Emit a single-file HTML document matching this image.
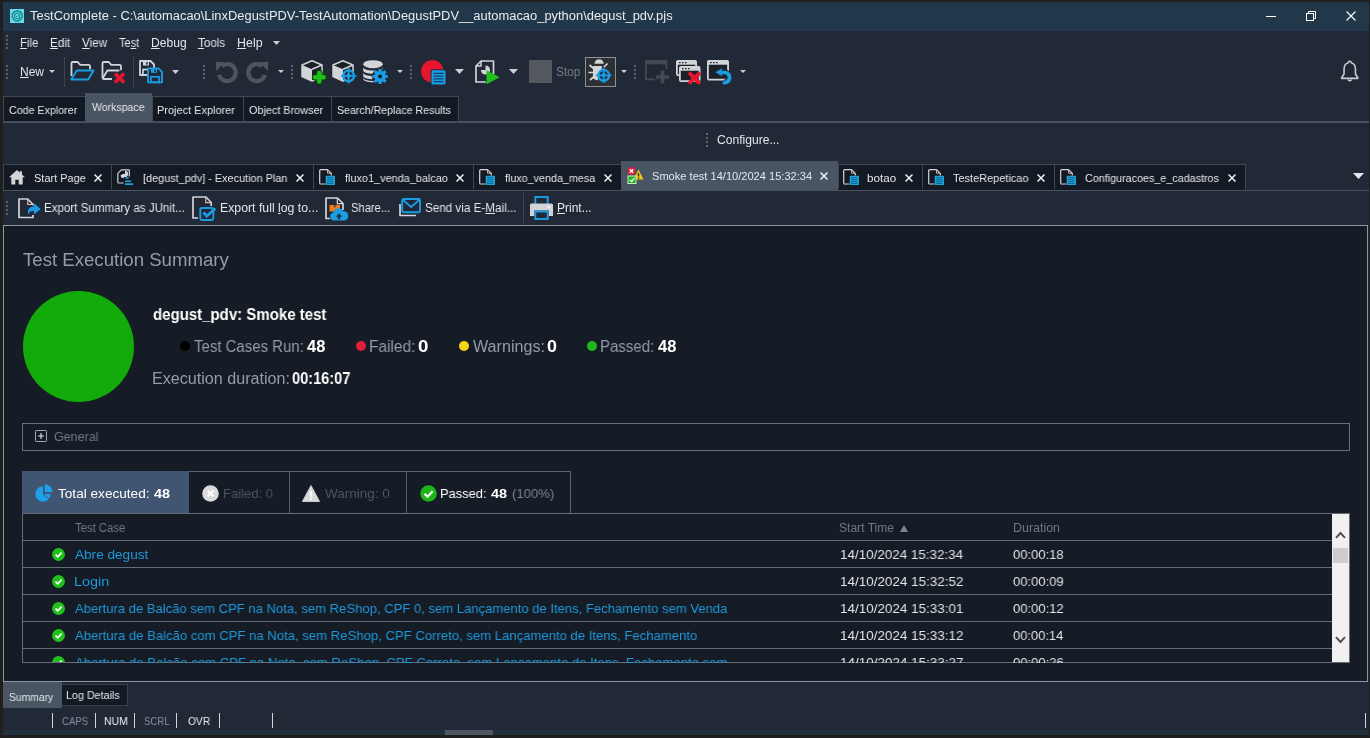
<!DOCTYPE html>
<html lang="pt-BR"><head><meta charset="utf-8"><title>TestComplete</title>
<style>
html,body{margin:0;padding:0}
body{width:1370px;height:738px;overflow:hidden;background:#1f1f1f;font-family:"Liberation Sans", sans-serif;position:relative}
.a{position:absolute;display:block}
.t{position:absolute;white-space:nowrap;line-height:1;margin:0;padding:0;transform-origin:0 0;will-change:transform}
u{text-decoration:underline;text-underline-offset:1px}
b{font-weight:700}
</style></head><body>
<div class="a" style="left:3px;top:2px;width:1366px;height:734px;background:#212836;"></div>
<div class="a" style="left:3px;top:2px;width:1366px;height:29px;background:#21374a;"></div>
<div class="a" style="left:3px;top:730px;width:1366px;height:5px;background:#222f3c;"></div>
<div class="a" style="left:445px;top:730px;width:48px;height:5px;background:#4d5764;"></div>
<div class="a" style="left:0px;top:735px;width:1370px;height:3px;background:#1e1e1e;"></div>
<div class="a" style="left:6px;top:35px;width:2px;height:2px;background:#5c6470;"></div>
<div class="a" style="left:6px;top:39px;width:2px;height:2px;background:#5c6470;"></div>
<div class="a" style="left:6px;top:43px;width:2px;height:2px;background:#5c6470;"></div>
<div class="a" style="left:6px;top:47px;width:2px;height:2px;background:#5c6470;"></div>
<div class="a" style="left:6px;top:65px;width:2px;height:2px;background:#5c6470;"></div>
<div class="a" style="left:6px;top:69px;width:2px;height:2px;background:#5c6470;"></div>
<div class="a" style="left:6px;top:73px;width:2px;height:2px;background:#5c6470;"></div>
<div class="a" style="left:6px;top:77px;width:2px;height:2px;background:#5c6470;"></div>
<div class="a" style="left:64px;top:57px;width:1px;height:30px;background:#3b4452;"></div>
<div class="a" style="left:133px;top:57px;width:1px;height:30px;background:#3b4452;"></div>
<div class="a" style="left:203px;top:65px;width:2px;height:2px;background:#5c6470;"></div>
<div class="a" style="left:203px;top:69px;width:2px;height:2px;background:#5c6470;"></div>
<div class="a" style="left:203px;top:73px;width:2px;height:2px;background:#5c6470;"></div>
<div class="a" style="left:203px;top:77px;width:2px;height:2px;background:#5c6470;"></div>
<div class="a" style="left:291px;top:65px;width:2px;height:2px;background:#5c6470;"></div>
<div class="a" style="left:291px;top:69px;width:2px;height:2px;background:#5c6470;"></div>
<div class="a" style="left:291px;top:73px;width:2px;height:2px;background:#5c6470;"></div>
<div class="a" style="left:291px;top:77px;width:2px;height:2px;background:#5c6470;"></div>
<div class="a" style="left:410px;top:65px;width:2px;height:2px;background:#5c6470;"></div>
<div class="a" style="left:410px;top:69px;width:2px;height:2px;background:#5c6470;"></div>
<div class="a" style="left:410px;top:73px;width:2px;height:2px;background:#5c6470;"></div>
<div class="a" style="left:410px;top:77px;width:2px;height:2px;background:#5c6470;"></div>
<div class="a" style="left:585px;top:57px;width:31px;height:30px;background:#2e2f33;box-sizing:border-box;border:1px solid #8d939c;"></div>
<div class="a" style="left:634px;top:65px;width:2px;height:2px;background:#5c6470;"></div>
<div class="a" style="left:634px;top:69px;width:2px;height:2px;background:#5c6470;"></div>
<div class="a" style="left:634px;top:73px;width:2px;height:2px;background:#5c6470;"></div>
<div class="a" style="left:634px;top:77px;width:2px;height:2px;background:#5c6470;"></div>
<div class="a" style="left:3px;top:121px;width:1366px;height:2px;background:#4a5262;"></div>
<div class="a" style="left:3px;top:96px;width:456px;height:26px;background:#141a23;box-sizing:border-box;border:1px solid #404856;"></div>
<div class="a" style="left:152px;top:97px;width:1px;height:24px;background:#404856;"></div>
<div class="a" style="left:243px;top:97px;width:1px;height:24px;background:#404856;"></div>
<div class="a" style="left:331px;top:97px;width:1px;height:24px;background:#404856;"></div>
<div class="a" style="left:85px;top:93px;width:67px;height:29px;background:#4a5564;"></div>
<div class="a" style="left:706px;top:133px;width:2px;height:2px;background:#5c6470;"></div>
<div class="a" style="left:706px;top:137px;width:2px;height:2px;background:#5c6470;"></div>
<div class="a" style="left:706px;top:141px;width:2px;height:2px;background:#5c6470;"></div>
<div class="a" style="left:706px;top:145px;width:2px;height:2px;background:#5c6470;"></div>
<div class="a" style="left:3px;top:190px;width:1366px;height:1px;background:#4a5261;"></div>
<div class="a" style="left:3px;top:164px;width:1243px;height:26px;background:#141a23;box-sizing:border-box;border:1px solid #404856;border-bottom:none;"></div>
<div class="a" style="left:111px;top:165px;width:1px;height:24px;background:#404856;"></div>
<div class="a" style="left:313px;top:165px;width:1px;height:24px;background:#404856;"></div>
<div class="a" style="left:473px;top:165px;width:1px;height:24px;background:#404856;"></div>
<div class="a" style="left:838px;top:165px;width:1px;height:24px;background:#404856;"></div>
<div class="a" style="left:922px;top:165px;width:1px;height:24px;background:#404856;"></div>
<div class="a" style="left:1054px;top:165px;width:1px;height:24px;background:#404856;"></div>
<div class="a" style="left:621px;top:161px;width:217px;height:30px;background:#4a5564;"></div>
<div class="a" style="left:6px;top:201px;width:2px;height:2px;background:#5c6470;"></div>
<div class="a" style="left:6px;top:205px;width:2px;height:2px;background:#5c6470;"></div>
<div class="a" style="left:6px;top:209px;width:2px;height:2px;background:#5c6470;"></div>
<div class="a" style="left:6px;top:213px;width:2px;height:2px;background:#5c6470;"></div>
<div class="a" style="left:523px;top:193px;width:1px;height:30px;background:#3b4452;"></div>
<div class="a" style="left:3px;top:225px;width:1365px;height:457px;background:#161c25;box-sizing:border-box;border:1px solid #8c97a5;"></div>
<div class="a" style="left:23px;top:291px;width:111px;height:111px;background:#13ab0a;border-radius:50%;"></div>
<div class="a" style="left:179.5px;top:341px;width:10px;height:10px;background:#000000;border-radius:50%;"></div>
<div class="a" style="left:356px;top:341px;width:10px;height:10px;background:#e0203a;border-radius:50%;"></div>
<div class="a" style="left:459px;top:341px;width:10px;height:10px;background:#f5d416;border-radius:50%;"></div>
<div class="a" style="left:587px;top:341px;width:10px;height:10px;background:#1fb81a;border-radius:50%;"></div>
<div class="a" style="left:22px;top:423px;width:1328px;height:28px;box-sizing:border-box;border:1px solid #68717d;"></div>
<div class="a" style="left:22px;top:471px;width:549px;height:43px;box-sizing:border-box;border:1px solid #5c6571;"></div>
<div class="a" style="left:22px;top:471px;width:167px;height:43px;background:#3f5572;"></div>
<div class="a" style="left:289px;top:472px;width:1px;height:41px;background:#535c68;"></div>
<div class="a" style="left:406px;top:472px;width:1px;height:41px;background:#535c68;"></div>
<div class="a" style="left:22px;top:513px;width:1328px;height:150px;box-sizing:border-box;border:1px solid #646d79;"></div>
<div class="a" style="left:23px;top:540px;width:1309px;height:1px;background:#646d79;"></div>
<div class="a" style="left:23px;top:567px;width:1309px;height:1px;background:#646d79;"></div>
<div class="a" style="left:23px;top:594px;width:1309px;height:1px;background:#646d79;"></div>
<div class="a" style="left:23px;top:621px;width:1309px;height:1px;background:#646d79;"></div>
<div class="a" style="left:23px;top:648px;width:1309px;height:1px;background:#646d79;"></div>
<div class="a" style="left:1332px;top:514px;width:17px;height:148px;background:#f0f0f0;"></div>
<div class="a" style="left:1333px;top:548px;width:15px;height:15px;background:#cdcdcd;"></div>
<div class="a" style="left:62px;top:684px;width:66px;height:22px;background:#141a23;box-sizing:border-box;border:1px solid #363f4c;border-left:none;"></div>
<div class="a" style="left:3px;top:682px;width:59px;height:26px;background:#4a5564;"></div>
<div class="a" style="left:52px;top:713px;width:1px;height:15px;background:#d0d4d9;"></div>
<div class="a" style="left:95px;top:713px;width:1px;height:15px;background:#d0d4d9;"></div>
<div class="a" style="left:134px;top:713px;width:1px;height:15px;background:#d0d4d9;"></div>
<div class="a" style="left:176px;top:713px;width:1px;height:15px;background:#d0d4d9;"></div>
<div class="a" style="left:219px;top:713px;width:1px;height:15px;background:#d0d4d9;"></div>
<div class="a" style="left:272px;top:713px;width:1px;height:15px;background:#d0d4d9;"></div>
<div class="a" style="left:1365px;top:713px;width:1px;height:15px;background:#d0d4d9;"></div>
<svg class="a" style="left:9.7px;top:8.8px" width="14.5" height="14.5" viewBox="0 0 16 16"><rect width="16" height="16" fill="#62dbe7"/><path d="M8 1.800l1.500 1 1.800-.2.700 1.700 1.600.9-.5 1.800.7 1.700-1.400 1.200-.2 1.800-1.800.4L9.300 13.500 8 12.900l-1.300.6-1.100-1.400-1.800-.4-.2-1.800-1.400-1.200.7-1.700-.5-1.800 1.600-.9.700-1.700 1.800.2z" fill="none" stroke="#17808f" stroke-width="1.400" stroke-linejoin="round"/><circle cx="8" cy="7.700" r="3" fill="none" stroke="#17808f" stroke-width="1.200"/><path d="M6.700 7.700l.9 1 1.700-1.900" fill="none" stroke="#17808f" stroke-width="1"/></svg>
<svg class="a" style="left:1266px;top:16px" width="10" height="1" viewBox="0 0 10 1"><rect width="10" height="1" fill="#fff"/></svg>
<svg class="a" style="left:1306px;top:11px" width="10" height="10" viewBox="0 0 10 10"><path d="M2.5 2.5V.5h7v7h-2" fill="none" stroke="#fff"/><rect x=".5" y="2.5" width="7" height="7" fill="none" stroke="#fff"/></svg>
<svg class="a" style="left:1346px;top:11px" width="10" height="10" viewBox="0 0 10 10"><path d="M.5.5l9 9M9.500.5L.5 9.500" stroke="#fff" stroke-width="1.1" fill="none"/></svg>
<svg class="a" style="left:273px;top:41px" width="7" height="4" viewBox="0 0 7 4"><path d="M0 0H7L3.5 4Z" fill="#c9ced6"/></svg>
<svg class="a" style="left:49px;top:70px" width="6" height="3" viewBox="0 0 6 3"><path d="M0 0H6L3.0 3Z" fill="#c9ced6"/></svg>
<svg class="a" style="left:70px;top:61px" width="25" height="20" viewBox="0 0 25 20"><path d="M1.500 15V2.200c0-.7.500-1.200 1.200-1.200h5.100l2.400 2.800h8.300c.9 0 1.500.6 1.500 1.500v3" fill="none" stroke="#d2d4d7" stroke-width="1.800" stroke-linejoin="round"/><path d="M6.800 9.500h16.700l-5.300 9H1.200z" fill="none" stroke="#1b9de4" stroke-width="1.900" stroke-linejoin="round"/></svg>
<svg class="a" style="left:101px;top:61px" width="25" height="23" viewBox="0 0 25 23"><path d="M11 18H2.700c-.7 0-1.200-.5-1.200-1.200V2.200c0-.7.500-1.200 1.200-1.200h5.100l2.400 2.800h8.300c.9 0 1.500.6 1.500 1.500v4" fill="none" stroke="#d2d4d7" stroke-width="1.800" stroke-linejoin="round"/><path d="M1.800 17l4.600-7.500h12" fill="none" stroke="#d2d4d7" stroke-width="1.800" stroke-linejoin="round"/><path d="M14 12.500l9 9M23 12.500l-9 9" stroke="#e8152f" stroke-width="3.600" fill="none"/></svg>
<svg class="a" style="left:139px;top:60px" width="25" height="24" viewBox="0 0 25 24"><g transform="translate(0,0)"><path d="M1 1h10.500l3.500 3.500V15H1z" fill="#212836" stroke="#d2d4d7" stroke-width="1.800" stroke-linejoin="round"/><rect x="4" y="1.500" width="6" height="4" fill="#d2d4d7"/><rect x="7.200" y="2.200" width="1.600" height="2.400" fill="#212836"/><rect x="4" y="9.500" width="8" height="5.500" fill="none" stroke="#d2d4d7" stroke-width="1.700"/></g><g transform="translate(8,7.3)"><path d="M1 1h10.500l3.500 3.500V15H1z" fill="#212836" stroke="#1b9de4" stroke-width="1.800" stroke-linejoin="round"/><rect x="4" y="1.500" width="6" height="4" fill="#1b9de4"/><rect x="7.200" y="2.200" width="1.600" height="2.400" fill="#212836"/><rect x="4" y="9.500" width="8" height="5.500" fill="none" stroke="#1b9de4" stroke-width="1.700"/></g></svg>
<svg class="a" style="left:172px;top:70px" width="7" height="4" viewBox="0 0 7 4"><path d="M0 0H7L3.5 4Z" fill="#c9ced6"/></svg>
<svg class="a" style="left:214.5px;top:60px" width="23" height="24" viewBox="0 0 23 24"><path d="M6.740 6.090A8.500 8.500 0 114 14.800" fill="none" stroke="#4f555d" stroke-width="4.300"/><path d="M.6 1.800l9.200.5-8.700 8.700z" fill="#4f555d"/></svg>
<svg class="a" style="left:245.5px;top:60px" width="23" height="24" viewBox="0 0 23 24"><path d="M16.260 6.090A8.500 8.500 0 1019 14.800" fill="none" stroke="#4f555d" stroke-width="4.300"/><path d="M22.400 1.800l-9.200.5 8.700 8.700z" fill="#4f555d"/></svg>
<svg class="a" style="left:278px;top:70px" width="6" height="3" viewBox="0 0 6 3"><path d="M0 0H6L3.0 3Z" fill="#c9ced6"/></svg>
<svg class="a" style="left:301px;top:60px" width="27" height="26" viewBox="0 0 27 26"><path d="M11 .8l10 4.200v11.500L11 21 1 16.500V5z" fill="#1b2029" stroke="#d2d4d7" stroke-width="1.500" stroke-linejoin="round"/><path d="M1 5l10 4.300V21L1 16.500z" fill="#d2d4d7"/><path d="M11 9.300L21 5" stroke="#d2d4d7" stroke-width="1.500" fill="none"/><path d="M18.300 13v8.600M14 17.300h8.600" stroke="#0d430c" stroke-width="6.400" stroke-linecap="round"/><path d="M18.300 13v8.600M14 17.300h8.600" stroke="#1fc01a" stroke-width="4.400" stroke-linecap="round"/></svg>
<svg class="a" style="left:332px;top:60px" width="26" height="26" viewBox="0 0 26 26"><path d="M11 .8l10 4.200v11.500L11 21 1 16.500V5z" fill="#1b2029" stroke="#d2d4d7" stroke-width="1.500" stroke-linejoin="round"/><path d="M1 5l10 4.300V21L1 16.500z" fill="#d2d4d7"/><path d="M11 9.300L21 5" stroke="#d2d4d7" stroke-width="1.500" fill="none"/><circle cx="16.6" cy="15.8" r="5.4" fill="#212836" stroke="#1b9de4" stroke-width="2.400"/><path d="M16.6 8.0V23.6M8.8 15.8H24.4" stroke="#1b9de4" stroke-width="1.800"/><circle cx="16.6" cy="15.8" r="2.200" fill="#1b9de4"/></svg>
<svg class="a" style="left:363px;top:60px" width="26" height="26" viewBox="0 0 26 26"><ellipse cx="10" cy="4.200" rx="9.800" ry="4" fill="#d2d4d7"/><path d="M.2 7.300c1 4.300 18.600 4.300 19.600 0v3.200c-1 4.300-18.600 4.300-19.600 0z" fill="#d2d4d7"/><path d="M.2 12.800c1 4.300 18.600 4.300 19.600 0v3.200c-1 4.300-18.600 4.300-19.600 0z" fill="#d2d4d7"/><path d="M.2 18.300c1 4.300 18.600 4.300 19.600 0v-.6c0 5.500-19.600 5.500-19.600 0z" fill="#d2d4d7"/><path d="M.2 17.700c1 4.300 18.600 4.300 19.600 0v1.300c-1 4.300-18.600 4.300-19.600 0z" fill="#d2d4d7"/><circle cx="17.1" cy="16.5" r="8.300" fill="#212836"/><path d="M21.60 16.50L24.70 16.50M20.28 19.68L22.47 21.87M17.10 21.00L17.10 24.10M13.92 19.68L11.73 21.87M12.60 16.50L9.50 16.50M13.92 13.32L11.73 11.13M17.10 12.00L17.10 8.90M20.28 13.32L22.47 11.13" stroke="#1b9de4" stroke-width="3.200"/><circle cx="17.1" cy="16.5" r="5.600" fill="#1b9de4"/><circle cx="17.1" cy="16.5" r="2" fill="#16202c"/></svg>
<svg class="a" style="left:397px;top:70px" width="6" height="3" viewBox="0 0 6 3"><path d="M0 0H6L3.0 3Z" fill="#c9ced6"/></svg>
<svg class="a" style="left:420.6px;top:59.6px" width="26" height="26" viewBox="0 0 26 26"><circle cx="11.300" cy="11.300" r="11.200" fill="#e8152f"/><rect x="9.600" y="9.300" width="15.600" height="15.800" rx="2" fill="#212836"/><rect x="10.500" y="10.200" width="14" height="14.200" rx="1.500" fill="#1b9de4"/><path d="M12.500 13.300h10M12.500 16.100h10M12.500 18.900h10M12.500 21.700h10" stroke="#0f3f66" stroke-width="1.300"/></svg>
<svg class="a" style="left:455px;top:69px" width="9" height="5" viewBox="0 0 9 5"><path d="M0 0H9L4.5 5Z" fill="#c9ced6"/></svg>
<svg class="a" style="left:475px;top:60px" width="25" height="24" viewBox="0 0 25 24"><path d="M6 1h12.500v13M11 22H1V6" fill="none" stroke="#d2d4d7" stroke-width="1.700" stroke-linejoin="round"/><path d="M1 6l5-5v5z" fill="none" stroke="#d2d4d7" stroke-width="1.500" stroke-linejoin="round"/><circle cx="10.500" cy="10" r="4.600" fill="#d2d4d7"/><path d="M10.500 10V4.800a5.200 5.200 0 00-5 5.200z" fill="#212836"/><path d="M11.500 10.300v14l13.200-7z" fill="#1fc01a"/></svg>
<svg class="a" style="left:509px;top:69px" width="9" height="5" viewBox="0 0 9 5"><path d="M0 0H9L4.5 5Z" fill="#c9ced6"/></svg>
<svg class="a" style="left:529px;top:60px" width="23" height="23" viewBox="0 0 23 23"><rect width="23" height="23" fill="#54595f"/></svg>
<svg class="a" style="left:587px;top:59px" width="28" height="26" viewBox="0 0 28 26"><path d="M7.500 4.800a4.600 4.600 0 019.200 0z" fill="#d2d4d7"/><path d="M6 7h9l-1 10-4 4.500-4-2z" fill="#d2d4d7"/><path d="M6.500 9.500L2.500 6M6 13.500H1.500M7 17.500l-4 3.500M17 8l3.500-3.500" stroke="#d2d4d7" stroke-width="1.700" fill="none"/><circle cx="16.7" cy="16.3" r="5.4" fill="#212836" stroke="#1b9de4" stroke-width="2.400"/><path d="M16.7 8.5V24.1M8.899999999999999 16.3H24.5" stroke="#1b9de4" stroke-width="1.800"/><circle cx="16.7" cy="16.3" r="2.200" fill="#1b9de4"/></svg>
<svg class="a" style="left:621px;top:70px" width="6" height="3" viewBox="0 0 6 3"><path d="M0 0H6L3.0 3Z" fill="#c9ced6"/></svg>
<svg class="a" style="left:645px;top:60px" width="24" height="24" viewBox="0 0 24 24"><rect x=".9" y=".9" width="20.500" height="18.500" fill="none" stroke="#434951" stroke-width="1.800"/><rect x=".9" y=".9" width="20.500" height="3.500" fill="#434951"/><rect x="10" y="9" width="14" height="15" fill="#212836"/><path d="M17.500 10.500v13M11 17h13" stroke="#434951" stroke-width="3.600"/></svg>
<svg class="a" style="left:676px;top:60px" width="26" height="25" viewBox="0 0 26 25"><rect x="0.9" y="0.9" width="19.2" height="14.2" rx="1" fill="#1b2029" stroke="#d2d4d7" stroke-width="1.800"/><rect x="0.9" y="0.9" width="19.2" height="3.800" fill="#d2d4d7"/><path d="M3 2.6h1.600m1.400 0h1.600m1.400 0h1.600" stroke="#1b2029" stroke-width="1.400"/><rect x="3.9" y="6.9" width="19.7" height="14.2" rx="1" fill="#1b2029" stroke="#d2d4d7" stroke-width="1.800"/><rect x="3.9" y="6.9" width="19.7" height="3.800" fill="#d2d4d7"/><path d="M6 8.6h1.600m1.400 0h1.600m1.400 0h1.600" stroke="#1b2029" stroke-width="1.400"/><path d="M14.200 13.800l8.600 8.600M22.800 13.800l-8.600 8.600" stroke="#e8152f" stroke-width="4" stroke-linecap="round"/></svg>
<svg class="a" style="left:707px;top:60px" width="26" height="25" viewBox="0 0 26 25"><rect x="0.9" y="0.9" width="20.2" height="18.7" rx="1" fill="#1b2029" stroke="#d2d4d7" stroke-width="1.800"/><rect x="0.9" y="0.9" width="20.2" height="3.800" fill="#d2d4d7"/><path d="M3 2.6h1.600m1.400 0h1.600m1.400 0h1.600" stroke="#1b2029" stroke-width="1.400"/><path d="M14.400 12.500H17.600A5 5 0 1115.900 22.200" fill="none" stroke="#212836" stroke-width="6"/><path d="M7.500 12.200l7.600-4.800v9.600z" fill="#212836" stroke="#212836" stroke-width="1.500"/><path d="M14.400 12.500H17.600A5 5 0 1115.900 22.200" fill="none" stroke="#1b9de4" stroke-width="3.700"/><path d="M8.700 12.200l6.100-3.800v7.600z" fill="#1b9de4"/></svg>
<svg class="a" style="left:740px;top:70px" width="6" height="3" viewBox="0 0 6 3"><path d="M0 0H6L3.0 3Z" fill="#c9ced6"/></svg>
<svg class="a" style="left:1338.5px;top:59.8px" width="21.5" height="23.2" viewBox="0 0 20 22"><path d="M10 1.2c.9 0 1.4.6 1.4 1.4 2.6.7 4 2.900 4 5.900v4.800l2.300 3.500v.6H2.300v-.6l2.300-3.500V8.500c0-3 1.400-5.200 4-5.900 0-.8.500-1.400 1.400-1.400z" fill="none" stroke="#c9ccd1" stroke-width="1.5" stroke-linejoin="round"/><path d="M8.300 18.500a1.800 1.800 0 003.400 0" fill="none" stroke="#c9ccd1" stroke-width="1.400"/></svg>
<svg class="a" style="left:9px;top:170px" width="16" height="15" viewBox="0 0 16 15"><path d="M8 0L0 7.300h2.300V14.500h4v-4.800h3.400v4.800h4V7.300H16L13 4.500V1.200h-2.200v1.400z" fill="#d2d4d7"/></svg>
<svg class="a" style="left:94px;top:174px" width="8" height="8" viewBox="0 0 9 9"><path d="M.6.600l7.800 7.800M8.400.6L.6 8.400" stroke="#f4f5f7" stroke-width="1.650" fill="none"/></svg>
<svg class="a" style="left:117px;top:169px" width="17" height="17" viewBox="0 0 17 17"><path d="M.8 13.300V4.300L4.300.8H12.300v6.700" fill="none" stroke="#d2d4d7" stroke-width="1.200" stroke-linejoin="round"/><path d="M.8 13.300c0 .4.300.7.700.7h5" fill="none" stroke="#d2d4d7" stroke-width="1.200"/><path d="M8 1.800a3.100 3.100 0 11-3.100 3.100H8z" fill="#d2d4d7"/><path d="M6.800 6.100v3.200a3.200 3.200 0 01-3.200-3.200z" fill="#d2d4d7"/><path d="M8.400 9h3.200M8.100 12.200h6M7.900 15.100h8.200" stroke="#1fa3d6" stroke-width="1.600"/></svg>
<svg class="a" style="left:296px;top:174px" width="8" height="8" viewBox="0 0 9 9"><path d="M.6.600l7.800 7.800M8.400.6L.6 8.400" stroke="#f4f5f7" stroke-width="1.650" fill="none"/></svg>
<svg class="a" style="left:319px;top:169px" width="16" height="16" viewBox="0 0 16 16"><path d="M.7 14.300V1.700c0-.6.400-1 1-1h6.800l3.800 3.800V6.500" fill="none" stroke="#d2d4d7" stroke-width="1.200" stroke-linejoin="round"/><path d="M.7 14.300c0 .4.300.7.700.7h5" fill="none" stroke="#d2d4d7" stroke-width="1.200"/><path d="M8.500 1v3.200h3.300" fill="none" stroke="#e9b7b0" stroke-width=".9"/><rect x="6.700" y="6.800" width="9.300" height="9.200" rx=".6" fill="#1fa3d6"/><path d="M8.200 8.800h6.300M8.200 10.700h6.300M8.200 12.600h6.300M8.200 14.500h6.300" stroke="#0f5f8e" stroke-width=".9"/></svg>
<svg class="a" style="left:455.5px;top:174px" width="8" height="8" viewBox="0 0 9 9"><path d="M.6.600l7.800 7.800M8.400.6L.6 8.400" stroke="#f4f5f7" stroke-width="1.650" fill="none"/></svg>
<svg class="a" style="left:479px;top:169px" width="16" height="16" viewBox="0 0 16 16"><path d="M.7 14.300V1.700c0-.6.400-1 1-1h6.800l3.800 3.800V6.500" fill="none" stroke="#d2d4d7" stroke-width="1.200" stroke-linejoin="round"/><path d="M.7 14.300c0 .4.300.7.700.7h5" fill="none" stroke="#d2d4d7" stroke-width="1.200"/><path d="M8.500 1v3.200h3.300" fill="none" stroke="#e9b7b0" stroke-width=".9"/><rect x="6.700" y="6.800" width="9.300" height="9.200" rx=".6" fill="#1fa3d6"/><path d="M8.200 8.800h6.300M8.200 10.700h6.300M8.200 12.600h6.300M8.200 14.500h6.300" stroke="#0f5f8e" stroke-width=".9"/></svg>
<svg class="a" style="left:604px;top:174px" width="8" height="8" viewBox="0 0 9 9"><path d="M.6.600l7.800 7.800M8.400.6L.6 8.400" stroke="#f4f5f7" stroke-width="1.650" fill="none"/></svg>
<svg class="a" style="left:843px;top:169px" width="16" height="16" viewBox="0 0 16 16"><path d="M.7 14.300V1.700c0-.6.400-1 1-1h6.800l3.800 3.800V6.500" fill="none" stroke="#d2d4d7" stroke-width="1.200" stroke-linejoin="round"/><path d="M.7 14.300c0 .4.300.7.700.7h5" fill="none" stroke="#d2d4d7" stroke-width="1.200"/><path d="M8.500 1v3.200h3.300" fill="none" stroke="#e9b7b0" stroke-width=".9"/><rect x="6.700" y="6.800" width="9.300" height="9.200" rx=".6" fill="#1fa3d6"/><path d="M8.200 8.800h6.300M8.200 10.700h6.300M8.200 12.600h6.300M8.200 14.500h6.300" stroke="#0f5f8e" stroke-width=".9"/></svg>
<svg class="a" style="left:905px;top:174px" width="8" height="8" viewBox="0 0 9 9"><path d="M.6.600l7.800 7.800M8.400.6L.6 8.400" stroke="#f4f5f7" stroke-width="1.650" fill="none"/></svg>
<svg class="a" style="left:928px;top:169px" width="16" height="16" viewBox="0 0 16 16"><path d="M.7 14.300V1.700c0-.6.400-1 1-1h6.800l3.800 3.800V6.500" fill="none" stroke="#d2d4d7" stroke-width="1.200" stroke-linejoin="round"/><path d="M.7 14.300c0 .4.300.7.700.7h5" fill="none" stroke="#d2d4d7" stroke-width="1.200"/><path d="M8.500 1v3.200h3.300" fill="none" stroke="#e9b7b0" stroke-width=".9"/><rect x="6.700" y="6.800" width="9.300" height="9.200" rx=".6" fill="#1fa3d6"/><path d="M8.200 8.800h6.300M8.200 10.700h6.300M8.200 12.600h6.300M8.200 14.500h6.300" stroke="#0f5f8e" stroke-width=".9"/></svg>
<svg class="a" style="left:1037px;top:174px" width="8" height="8" viewBox="0 0 9 9"><path d="M.6.600l7.800 7.800M8.400.6L.6 8.400" stroke="#f4f5f7" stroke-width="1.650" fill="none"/></svg>
<svg class="a" style="left:1060px;top:169px" width="16" height="16" viewBox="0 0 16 16"><path d="M.7 14.300V1.700c0-.6.400-1 1-1h6.800l3.800 3.800V6.500" fill="none" stroke="#d2d4d7" stroke-width="1.200" stroke-linejoin="round"/><path d="M.7 14.300c0 .4.300.7.700.7h5" fill="none" stroke="#d2d4d7" stroke-width="1.200"/><path d="M8.500 1v3.200h3.300" fill="none" stroke="#e9b7b0" stroke-width=".9"/><rect x="6.700" y="6.800" width="9.300" height="9.200" rx=".6" fill="#1fa3d6"/><path d="M8.200 8.800h6.300M8.200 10.700h6.300M8.200 12.600h6.300M8.200 14.500h6.300" stroke="#0f5f8e" stroke-width=".9"/></svg>
<svg class="a" style="left:1228px;top:174px" width="8" height="8" viewBox="0 0 9 9"><path d="M.6.600l7.800 7.800M8.400.6L.6 8.400" stroke="#f4f5f7" stroke-width="1.650" fill="none"/></svg>
<svg class="a" style="left:627px;top:166.6px" width="17" height="17" viewBox="0 0 17 17"><circle cx="4.500" cy="4" r="4" fill="#e0203a"/><path d="M2.800 2.300l3.400 3.400M6.200 2.300L2.800 5.700" stroke="#fff" stroke-width="1.300"/><path d="M11.500 2.500L16.500 12.500H6.500z" fill="#f2c511"/><path d="M11.500 6v3.500M11.500 10.500v1.200" stroke="#3a2c00" stroke-width="1.300"/><rect x="1" y="9" width="8" height="7.500" fill="#21b11c" stroke="#c9f0c0" stroke-width="1"/><path d="M3 12.800l1.700 1.700 2.700-3.300" stroke="#fff" stroke-width="1.200" fill="none"/></svg>
<svg class="a" style="left:820px;top:172px" width="8" height="8" viewBox="0 0 9 9"><path d="M.6.600l7.800 7.800M8.400.6L.6 8.400" stroke="#f4f5f7" stroke-width="1.650" fill="none"/></svg>
<svg class="a" style="left:1353px;top:173px" width="11" height="6" viewBox="0 0 11 6"><path d="M0 0H11L5.5 6Z" fill="#e6e8eb"/></svg>
<svg class="a" style="left:18px;top:198px" width="23" height="21" viewBox="0 0 23 21"><path d="M15 7.500V6.500L9.800 1H1v18.500h14V17" fill="none" stroke="#d2d4d7" stroke-width="1.700" stroke-linejoin="round"/><path d="M9.800 1v5.500H15" fill="none" stroke="#e5b8b8" stroke-width="1.200"/><path d="M16 5.200l6.700 5.700-6.700 5.700v-3.500c-3.200 0-5 .8-5.600 3.600-1.500-5.200 1-8.300 5.600-8.300z" fill="#1b9de4"/></svg>
<svg class="a" style="left:192px;top:196px" width="25" height="25" viewBox="0 0 25 25"><path d="M6 22H1V1h13l5.200 5.500V10" fill="none" stroke="#d2d4d7" stroke-width="1.700" stroke-linejoin="round"/><path d="M13.800 1v5.700h5.400" fill="none" stroke="#e5b8b8" stroke-width="1.200"/><rect x="8.300" y="12" width="13" height="12" rx="1.500" fill="#212836" stroke="#1b9de4" stroke-width="1.900"/><path d="M11.500 16.500l3.300 3.500 8.500-7.500" fill="none" stroke="#1b9de4" stroke-width="2.800"/></svg>
<svg class="a" style="left:325px;top:197px" width="23" height="24" viewBox="0 0 23 24"><path d="M5 21.500H1V1h11.500L18 6.500V13" fill="none" stroke="#d2d4d7" stroke-width="1.700" stroke-linejoin="round"/><path d="M12.300 1v5.700H18" fill="none" stroke="#d2d4d7" stroke-width="1.200"/><path d="M4.500 8h10.500v6.500H4.500z" fill="#f07a1c"/><path d="M8.500 8.500l1.300 2.200 1.300-2.200z" fill="#212836"/><path d="M9 23.500a4 4 0 01-.6-7.900 5.300 5.300 0 0110-1.300 4.700 4.700 0 011.500 9.200z" fill="#1b9de4"/><path d="M14 16.300l3.200 3.500h-2v2.700h-2.400v-2.700h-2z" fill="#16324a"/></svg>
<svg class="a" style="left:398px;top:198px" width="23" height="19" viewBox="0 0 23 19"><path d="M2 6v11.500h16" fill="none" stroke="#d2d4d7" stroke-width="1.700" stroke-linejoin="round"/><rect x="4.200" y="1" width="17.800" height="13.300" rx="1.500" fill="none" stroke="#1b9de4" stroke-width="1.900"/><path d="M4.800 1.800l8.300 7.200 8.300-7.200" fill="none" stroke="#1b9de4" stroke-width="1.900"/></svg>
<svg class="a" style="left:530px;top:196px" width="23" height="24" viewBox="0 0 23 24"><rect x="5.300" y="1" width="12.400" height="8" fill="none" stroke="#1b9de4" stroke-width="1.900"/><path d="M0 9.200c0-1 .8-1.700 1.700-1.700h19.600c1 0 1.700.8 1.700 1.700V20H0z" fill="#d2d4d7"/><rect x="4.300" y="14.500" width="14.400" height="9" fill="#212836"/><rect x="5.300" y="15.500" width="12.400" height="7.500" fill="none" stroke="#1b9de4" stroke-width="1.900"/><rect x="17.500" y="10.300" width="2.500" height="1.300" fill="#fff"/></svg>
<svg class="a" style="left:35px;top:430px" width="12" height="12" viewBox="0 0 12 12"><rect x=".5" y=".5" width="11" height="11" rx=".8" fill="none" stroke="#a3a9b1" stroke-width="1"/><path d="M3 6h6M6 3v6" stroke="#e8eaed" stroke-width="1.100"/></svg>
<svg class="a" style="left:34.5px;top:484px" width="18" height="18" viewBox="0 0 18 18"><path d="M8 2.300A7.700 7.700 0 1015.700 10H8z" fill="#1e9fe9"/><path d="M9.800.3A7.700 7.700 0 0117.500 8H9.800z" fill="#1e9fe9"/><path d="M8 10l6 5" stroke="#3f5572" stroke-width="1"/></svg>
<svg class="a" style="left:201.5px;top:484.5px" width="17" height="17" viewBox="0 0 17 17"><circle cx="8.500" cy="8.500" r="8.300" fill="#d9dadc"/><path d="M5.600 5.600l5.800 5.800M11.400 5.600l-5.800 5.800" stroke="#fff" stroke-width="2"/></svg>
<svg class="a" style="left:302px;top:484.5px" width="18" height="17" viewBox="0 0 18 17"><path d="M9 .5L17.600 16.500H.4z" fill="#d9dadc" stroke="#d9dadc" stroke-width=".8" stroke-linejoin="round"/><path d="M9 6v5.500M9 13v1.700" stroke="#fff" stroke-width="1.700"/></svg>
<svg class="a" style="left:419.5px;top:484.5px" width="17" height="17" viewBox="0 0 17 17"><circle cx="8.500" cy="8.500" r="8.300" fill="#1db51a"/><path d="M4.500 8.700l3 3 5.200-5.500" stroke="#fff" stroke-width="2.100" fill="none"/></svg>
<svg class="a" style="left:899.5px;top:525px" width="8" height="7" viewBox="0 0 8 7"><path d="M4 0l4 7H0z" fill="#7c8692"/></svg>
<svg class="a" style="left:51.5px;top:548px" width="13" height="13" viewBox="0 0 13 13"><circle cx="6.500" cy="6.500" r="6.400" fill="#22c01d"/><path d="M3.500 6.700l2.200 2.200 3.900-4.200" stroke="#fff" stroke-width="1.700" fill="none"/></svg>
<svg class="a" style="left:51.5px;top:575px" width="13" height="13" viewBox="0 0 13 13"><circle cx="6.500" cy="6.500" r="6.400" fill="#22c01d"/><path d="M3.500 6.700l2.200 2.200 3.900-4.200" stroke="#fff" stroke-width="1.700" fill="none"/></svg>
<svg class="a" style="left:51.5px;top:602px" width="13" height="13" viewBox="0 0 13 13"><circle cx="6.500" cy="6.500" r="6.400" fill="#22c01d"/><path d="M3.500 6.700l2.200 2.200 3.900-4.200" stroke="#fff" stroke-width="1.700" fill="none"/></svg>
<svg class="a" style="left:51.5px;top:629px" width="13" height="13" viewBox="0 0 13 13"><circle cx="6.500" cy="6.500" r="6.400" fill="#22c01d"/><path d="M3.500 6.700l2.200 2.200 3.900-4.200" stroke="#fff" stroke-width="1.700" fill="none"/></svg>
<svg class="a" style="left:51.5px;top:656px" width="13" height="6" viewBox="0 0 13 6"><circle cx="6.500" cy="6.500" r="6.400" fill="#22c01d"/><path d="M3.500 6.700l2.200 2.200 3.900-4.200" stroke="#fff" stroke-width="1.700" fill="none"/></svg>
<svg class="a" style="left:1335px;top:531px" width="11" height="8" viewBox="0 0 11 8"><path d="M1 6.800L5.500 2 10 6.800" fill="none" stroke="#505050" stroke-width="1.900"/></svg>
<svg class="a" style="left:1335px;top:636px" width="11" height="8" viewBox="0 0 11 8"><path d="M1 1.200L5.500 6 10 1.200" fill="none" stroke="#505050" stroke-width="1.900"/></svg>
<span class="t" id="t0" style="left:30.00px;top:9.84px;font-size:12px;color:#e9ecef;font-weight:400;transform:scaleX(1.0756);">TestComplete - C:\automacao\LinxDegustPDV-TestAutomation\DegustPDV__automacao_python\degust_pdv.pjs</span>
<span class="t" id="t1" style="left:20.00px;top:36.84px;font-size:12px;color:#e4e7eb;font-weight:400;transform:scaleX(0.9514);"><u>F</u>ile</span>
<span class="t" id="t2" style="left:50.00px;top:36.84px;font-size:12px;color:#e4e7eb;font-weight:400;transform:scaleX(0.9774);"><u>E</u>dit</span>
<span class="t" id="t3" style="left:82.00px;top:36.84px;font-size:12px;color:#e4e7eb;font-weight:400;transform:scaleX(0.9699);"><u>V</u>iew</span>
<span class="t" id="t4" style="left:119.00px;top:36.84px;font-size:12px;color:#e4e7eb;font-weight:400;transform:scaleX(0.9161);">Te<u>s</u>t</span>
<span class="t" id="t5" style="left:151.00px;top:36.84px;font-size:12px;color:#e4e7eb;font-weight:400;transform:scaleX(1.0082);"><u>D</u>ebug</span>
<span class="t" id="t6" style="left:198.00px;top:36.84px;font-size:12px;color:#e4e7eb;font-weight:400;transform:scaleX(0.9699);"><u>T</u>ools</span>
<span class="t" id="t7" style="left:237.00px;top:36.84px;font-size:12px;color:#e4e7eb;font-weight:400;transform:scaleX(1.0351);"><u>H</u>elp</span>
<span class="t" id="t8" style="left:20.00px;top:65.84px;font-size:12px;color:#e4e7eb;font-weight:400;transform:scaleX(0.9982);"><u>N</u>ew</span>
<span class="t" id="t9" style="left:556.00px;top:65.84px;font-size:12px;color:#77808b;font-weight:400;transform:scaleX(0.9864);">Stop</span>
<span class="t" id="t10" style="left:9.00px;top:104.69px;font-size:11px;color:#e4e7eb;font-weight:400;transform:scaleX(0.9694);">Code Explorer</span>
<span class="t" id="t11" style="left:157.00px;top:104.69px;font-size:11px;color:#e4e7eb;font-weight:400;transform:scaleX(0.9954);">Project Explorer</span>
<span class="t" id="t12" style="left:249.00px;top:104.69px;font-size:11px;color:#e4e7eb;font-weight:400;transform:scaleX(0.9865);">Object Browser</span>
<span class="t" id="t13" style="left:337.00px;top:104.69px;font-size:11px;color:#e4e7eb;font-weight:400;transform:scaleX(0.9647);">Search/Replace Results</span>
<span class="t" id="t14" style="left:92.00px;top:101.69px;font-size:11px;color:#e4e7eb;font-weight:400;transform:scaleX(0.9572);">Workspace</span>
<span class="t" id="t15" style="left:717.00px;top:133.84px;font-size:12px;color:#e4e7eb;font-weight:400;transform:scaleX(1.0067);">Configure...</span>
<span class="t" id="t16" style="left:34.00px;top:172.69px;font-size:11px;color:#e4e7eb;font-weight:400;transform:scaleX(0.9965);">Start Page</span>
<span class="t" id="t17" style="left:143.00px;top:172.69px;font-size:11px;color:#e4e7eb;font-weight:400;transform:scaleX(0.9878);">[degust_pdv] - Execution Plan</span>
<span class="t" id="t18" style="left:345.00px;top:172.69px;font-size:11px;color:#e4e7eb;font-weight:400;transform:scaleX(0.9907);">fluxo1_venda_balcao</span>
<span class="t" id="t19" style="left:505.00px;top:172.69px;font-size:11px;color:#e4e7eb;font-weight:400;transform:scaleX(0.9769);">fluxo_venda_mesa</span>
<span class="t" id="t20" style="left:867.00px;top:172.69px;font-size:11px;color:#e4e7eb;font-weight:400;transform:scaleX(1.0572);">botao</span>
<span class="t" id="t21" style="left:953.00px;top:172.69px;font-size:11px;color:#e4e7eb;font-weight:400;transform:scaleX(0.9949);">TesteRepeticao</span>
<span class="t" id="t22" style="left:1085.00px;top:172.69px;font-size:11px;color:#e4e7eb;font-weight:400;transform:scaleX(0.9779);">Configuracoes_e_cadastros</span>
<span class="t" id="t23" style="left:652.00px;top:170.69px;font-size:11px;color:#e4e7eb;font-weight:400;transform:scaleX(1.0072);">Smoke test 14/10/2024 15:32:34</span>
<span class="t" id="t24" style="left:44.00px;top:201.84px;font-size:12px;color:#e4e7eb;font-weight:400;transform:scaleX(0.9641);">Export Summary as JUnit...</span>
<span class="t" id="t25" style="left:220.00px;top:201.84px;font-size:12px;color:#e4e7eb;font-weight:400;transform:scaleX(1.0238);">Export full <u>l</u>og to...</span>
<span class="t" id="t26" style="left:351.00px;top:201.84px;font-size:12px;color:#e4e7eb;font-weight:400;transform:scaleX(0.9324);">Share...</span>
<span class="t" id="t27" style="left:425.00px;top:201.84px;font-size:12px;color:#e4e7eb;font-weight:400;transform:scaleX(0.9721);">Send via E-<u>M</u>ail...</span>
<span class="t" id="t28" style="left:557.00px;top:201.84px;font-size:12px;color:#e4e7eb;font-weight:400;transform:scaleX(0.9987);"><u>P</u>rint...</span>
<span class="t" id="t29" style="left:23.00px;top:250.76px;font-size:18px;color:#939daa;font-weight:400;transform:scaleX(1.0339);">Test Execution Summary</span>
<span class="t" id="t30" style="left:153.00px;top:307.46px;font-size:16px;color:#ffffff;font-weight:700;transform:scaleX(0.9375);">degust_pdv: Smoke test</span>
<span class="t" id="t31" style="left:194.00px;top:339.46px;font-size:16px;color:#939daa;font-weight:400;transform:scaleX(0.9354);">Test Cases Run:</span>
<span class="t" id="t32" style="left:307.00px;top:339.46px;font-size:16px;color:#ffffff;font-weight:700;transform:scaleX(1.0277);">48</span>
<span class="t" id="t33" style="left:369.00px;top:339.46px;font-size:16px;color:#939daa;font-weight:400;transform:scaleX(0.9650);">Failed:</span>
<span class="t" id="t34" style="left:418.00px;top:339.46px;font-size:16px;color:#ffffff;font-weight:700;transform:scaleX(1.1688);">0</span>
<span class="t" id="t35" style="left:473.00px;top:339.46px;font-size:16px;color:#939daa;font-weight:400;transform:scaleX(1.0071);">Warnings:</span>
<span class="t" id="t36" style="left:547.00px;top:339.46px;font-size:16px;color:#ffffff;font-weight:700;transform:scaleX(1.1177);">0</span>
<span class="t" id="t37" style="left:600.00px;top:339.46px;font-size:16px;color:#939daa;font-weight:400;transform:scaleX(0.9377);">Passed:</span>
<span class="t" id="t38" style="left:658.00px;top:339.46px;font-size:16px;color:#ffffff;font-weight:700;transform:scaleX(1.0301);">48</span>
<span class="t" id="t39" style="left:152.00px;top:371.46px;font-size:16px;color:#939daa;font-weight:400;transform:scaleX(1.0073);">Execution duration:</span>
<span class="t" id="t40" style="left:292.00px;top:371.46px;font-size:16px;color:#ffffff;font-weight:700;transform:scaleX(0.9109);">00:16:07</span>
<span class="t" id="t41" style="left:54.00px;top:430.00px;font-size:13px;color:#6f7884;font-weight:400;transform:scaleX(0.9620);">General</span>
<span class="t" id="t42" style="left:58.00px;top:486.57px;font-size:13.5px;color:#ffffff;font-weight:400;transform:scaleX(1.0080);">Total executed:</span>
<span class="t" id="t43" style="left:154.00px;top:486.57px;font-size:13.5px;color:#ffffff;font-weight:700;transform:scaleX(1.0643);">48</span>
<span class="t" id="t44" style="left:223.00px;top:486.57px;font-size:13.5px;color:#4b5561;font-weight:400;transform:scaleX(0.9658);">Failed: 0</span>
<span class="t" id="t45" style="left:325.00px;top:486.57px;font-size:13.5px;color:#4b5561;font-weight:400;transform:scaleX(1.0010);">Warning: 0</span>
<span class="t" id="t46" style="left:440.00px;top:486.57px;font-size:13.5px;color:#ffffff;font-weight:400;transform:scaleX(0.9537);">Passed:</span>
<span class="t" id="t47" style="left:491.00px;top:486.57px;font-size:13.5px;color:#ffffff;font-weight:700;transform:scaleX(1.0729);">48</span>
<span class="t" id="t48" style="left:512.00px;top:486.57px;font-size:13.5px;color:#7b8591;font-weight:400;transform:scaleX(0.9697);">(100%)</span>
<span class="t" id="t49" style="left:75.00px;top:521.84px;font-size:12px;color:#6f7884;font-weight:400;transform:scaleX(0.9404);">Test Case</span>
<span class="t" id="t50" style="left:839.00px;top:521.84px;font-size:12px;color:#6f7884;font-weight:400;transform:scaleX(1.0059);">Start Time</span>
<span class="t" id="t51" style="left:1013.00px;top:521.84px;font-size:12px;color:#6f7884;font-weight:400;transform:scaleX(1.0360);">Duration</span>
<span class="t" id="t52" style="left:75.00px;top:547.57px;font-size:13.5px;color:#1f98da;font-weight:400;transform:scaleX(1.0063);">Abre degust</span>
<span class="t" id="t53" style="left:840.00px;top:547.57px;font-size:13.5px;color:#e1e4e8;font-weight:400;transform:scaleX(0.9944);">14/10/2024 15:32:34</span>
<span class="t" id="t54" style="left:1013.00px;top:547.57px;font-size:13.5px;color:#e1e4e8;font-weight:400;transform:scaleX(0.9642);">00:00:18</span>
<span class="t" id="t55" style="left:74.00px;top:574.57px;font-size:13.5px;color:#1f98da;font-weight:400;transform:scaleX(1.0638);">Login</span>
<span class="t" id="t56" style="left:840.00px;top:574.57px;font-size:13.5px;color:#e1e4e8;font-weight:400;transform:scaleX(0.9972);">14/10/2024 15:32:52</span>
<span class="t" id="t57" style="left:1013.00px;top:574.57px;font-size:13.5px;color:#e1e4e8;font-weight:400;transform:scaleX(0.9643);">00:00:09</span>
<span class="t" id="t58" style="left:75.00px;top:601.57px;font-size:13.5px;color:#1f98da;font-weight:400;transform:scaleX(0.9671);">Abertura de Balcão sem CPF na Nota, sem ReShop, CPF 0, sem Lançamento de Itens, Fechamento sem Venda</span>
<span class="t" id="t59" style="left:840.00px;top:601.57px;font-size:13.5px;color:#e1e4e8;font-weight:400;transform:scaleX(0.9971);">14/10/2024 15:33:01</span>
<span class="t" id="t60" style="left:1013.00px;top:601.57px;font-size:13.5px;color:#e1e4e8;font-weight:400;transform:scaleX(0.9647);">00:00:12</span>
<span class="t" id="t61" style="left:75.00px;top:628.57px;font-size:13.5px;color:#1f98da;font-weight:400;transform:scaleX(0.9711);">Abertura de Balcão com CPF na Nota, sem ReShop, CPF Correto, sem Lançamento de Itens, Fechamento</span>
<span class="t" id="t62" style="left:840.00px;top:628.57px;font-size:13.5px;color:#e1e4e8;font-weight:400;transform:scaleX(0.9972);">14/10/2024 15:33:12</span>
<span class="t" id="t63" style="left:1013.00px;top:628.57px;font-size:13.5px;color:#e1e4e8;font-weight:400;transform:scaleX(0.9579);">00:00:14</span>
<span class="t" id="t64" style="left:75.00px;top:655.57px;font-size:13.5px;color:#1f98da;font-weight:400;transform:scaleX(0.9738);height:7.3px;overflow:hidden;">Abertura de Balcão com CPF na Nota, com ReShop, CPF Correto, sem Lançamento de Itens, Fechamento sem</span>
<span class="t" id="t65" style="left:840.00px;top:655.57px;font-size:13.5px;color:#e1e4e8;font-weight:400;transform:scaleX(0.9972);height:7.3px;overflow:hidden;">14/10/2024 15:33:27</span>
<span class="t" id="t66" style="left:1013.00px;top:655.57px;font-size:13.5px;color:#e1e4e8;font-weight:400;transform:scaleX(0.9649);height:7.3px;overflow:hidden;">00:00:26</span>
<span class="t" id="t67" style="left:9.00px;top:691.69px;font-size:11px;color:#e4e7eb;font-weight:400;transform:scaleX(0.9395);">Summary</span>
<span class="t" id="t68" style="left:66.00px;top:689.69px;font-size:11px;color:#e4e7eb;font-weight:400;transform:scaleX(0.9760);">Log Details</span>
<span class="t" id="t69" style="left:62.00px;top:715.69px;font-size:11px;color:#858e9a;font-weight:400;transform:scaleX(0.8742);">CAPS</span>
<span class="t" id="t70" style="left:104.00px;top:715.69px;font-size:11px;color:#eef0f2;font-weight:400;transform:scaleX(0.9469);">NUM</span>
<span class="t" id="t71" style="left:144.00px;top:715.69px;font-size:11px;color:#858e9a;font-weight:400;transform:scaleX(0.8745);">SCRL</span>
<span class="t" id="t72" style="left:188.00px;top:715.69px;font-size:11px;color:#eef0f2;font-weight:400;transform:scaleX(0.9304);">OVR</span>
</body></html>
